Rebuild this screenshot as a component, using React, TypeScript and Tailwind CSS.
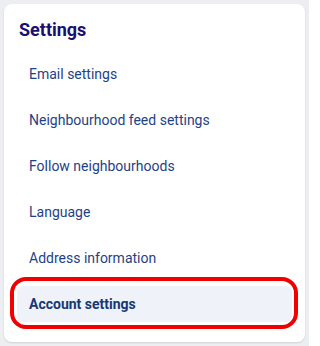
const items = [
  "Email settings",
  "Neighbourhood feed settings",
  "Follow neighbourhoods",
  "Language",
  "Address information",
  "Account settings",
];

export default function App() {
  const active = "Account settings";

  return (
    <div
      className="min-h-[346px] w-[309px] bg-[#eceef2] p-[4px]"
      style={{ fontFamily: "Roboto, 'Liberation Sans', sans-serif" }}
    >
      <div className="rounded-lg bg-white px-[13px] pb-[20px] pt-[14px] shadow-[0_1px_2px_rgba(0,0,0,0.12)]">
        <h2 className="px-[2px] text-[18px] font-bold leading-6 text-[#1c0e6e]">Settings</h2>

        <nav className="mt-[14px] flex flex-col gap-[10px]">
          {items.map((item) => {
            const isActive = item === active;
            return (
              <div key={item} className="relative">
                <a
                  href="#"
                  className={`flex h-[36px] items-center rounded-md px-[12px] text-[14px] ${
                    isActive
                      ? "bg-[#eff2f8] font-bold text-[#163876]"
                      : "text-[#1f4285]"
                  }`}
                >
                  {item}
                </a>
                {/* highlight ring */}
                {isActive && (
                  <div className="pointer-events-none absolute -bottom-[7px] -left-[7px] -right-[6px] -top-[9px] rounded-[16px] border-[4px] border-[#f00000]" />
                )}
              </div>
            );
          })}
        </nav>
      </div>
    </div>
  );
}
